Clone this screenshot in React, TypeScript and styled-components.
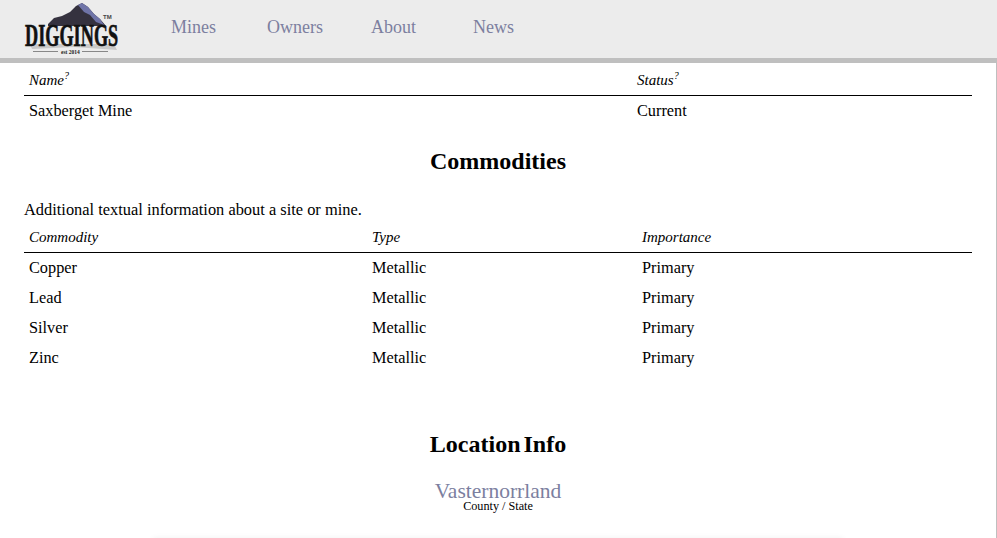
import { Fragment } from "react";
import styled, { createGlobalStyle } from "styled-components";

const Global = createGlobalStyle`
  html, body {
    margin: 0;
    padding: 0;
    background: #fff;
  }

  body {
    font-family: "Liberation Serif", "DejaVu Serif", serif;
    color: #000;
    overflow: hidden;
  }
`;

const Page = styled.div`
  width: 997px;
  height: 538px;
  overflow: hidden;
  box-sizing: border-box;
`;

const Header = styled.header`
  display: flex;
  align-items: center;
  height: 58px;
  background: #ececec;
  border-bottom: 5px solid #bfbfbf;
`;

const LogoWrap = styled.div`
  width: 171px;
  padding-left: 24px;
  box-sizing: border-box;
  display: flex;
`;

const Nav = styled.nav`
  display: grid;
  grid-template-columns: 96px 104px 102px auto;
  height: 100%;
  align-items: center;
  margin-top: -4px;
`;

const NavLink = styled.a`
  font-size: 18px;
  color: #7c7f9f;
`;

const Main = styled.main`
  border-right: 1px solid #bfbfbf;
  height: 475px;
  padding: 0 24px;
  box-sizing: border-box;
  width: 997px;
  overflow: hidden;
`;

const Table = styled.div<{ $cols: string }>`
  display: grid;
  grid-template-columns: ${({ $cols }) => $cols};
  width: 948px;
`;

const HeadCell = styled.div`
  font-style: italic;
  font-size: 15px;
  height: 33px;
  line-height: 35px;
  padding-left: 5px;
  border-bottom: 1px solid #000;
  box-sizing: border-box;

  sup {
    font-size: 10px;
    line-height: 0;
    vertical-align: 6px;
  }
`;

const BodyCell = styled.div`
  font-size: 16.3px;
  height: 30px;
  line-height: 30px;
  padding-left: 5px;
`;

const SectionTitle = styled.h2<{ $top: number; $bottom: number }>`
  margin: ${({ $top }) => $top}px 0 ${({ $bottom }) => $bottom}px;
  text-align: center;
  font-size: 24px;
  line-height: 28px;
  font-weight: 700;
  word-spacing: -3px;
`;

const Note = styled.p`
  margin: 0;
  font-size: 16.4px;
  line-height: 20px;
`;

const Place = styled.div`
  margin-top: 24px;
  text-align: center;
  font-size: 21.5px;
  line-height: 18px;
  color: #7c7f9f;
`;

const PlaceLabel = styled.div`
  text-align: center;
  font-size: 12.2px;
  line-height: 13px;
`;

const MapFrame = styled.div`
  width: 690px;
  height: 200px;
  margin: 25px auto 0;
  box-shadow: 0 0 6px rgba(0, 0, 0, 0.06);
`;

const Logo = () => (
  <svg width="97" height="56" viewBox="0 0 97 56">
    <path d="M24 23 L30 17 L38 15 L46 11 L52 5 L58 2 L64 6 L70 13 L76 18 L82 25 L24 25Z" fill="#35323f" />
    <path d="M54 4 L58 2 L64 6 L70 13 L76 18 L80 24 L72 21 L66 14 L60 11Z" fill="#6f74a8" />
    <path d="M6 43 L90 43 L93 49 L50 46 L8 48Z" fill="#c9c9c9" />
    <text
      transform="translate(1 45) scale(0.57 1)"
      fontFamily="Liberation Serif"
      fontWeight="700"
      fontSize="32"
      fill="#111"
      stroke="#111"
      strokeWidth="0.7"
    >
      DIGGINGS
    </text>
    <text x="79" y="18" fontFamily="Liberation Sans" fontWeight="700" fontSize="6" fill="#444">
      TM
    </text>
    <path d="M9 50.5 H34 M58 50.5 H84" stroke="#888" strokeWidth="1" />
    <text x="37" y="52.5" fontFamily="Liberation Serif" fontWeight="700" fontSize="5.5" fill="#222">
      est 2014
    </text>
  </svg>
);

const commodities = ["Copper", "Lead", "Silver", "Zinc"];

export default function App() {
  return (
    <Page>
      <Global />
      <Header>
        <LogoWrap>
          <Logo />
        </LogoWrap>
        <Nav>
          <NavLink>Mines</NavLink>
          <NavLink>Owners</NavLink>
          <NavLink>About</NavLink>
          <NavLink>News</NavLink>
        </Nav>
      </Header>
      <Main>
        <Table $cols="608px 1fr">
          <HeadCell>
            Name<sup>?</sup>
          </HeadCell>
          <HeadCell>
            Status<sup>?</sup>
          </HeadCell>
          <BodyCell>Saxberget Mine</BodyCell>
          <BodyCell>Current</BodyCell>
        </Table>
        <SectionTitle $top={21} $bottom={25}>Commodities</SectionTitle>
        <Note>Additional textual information about a site or mine.</Note>
        <Table $cols="343px 270px 1fr">
          <HeadCell>Commodity</HeadCell>
          <HeadCell>Type</HeadCell>
          <HeadCell>Importance</HeadCell>
          {commodities.map((name) => (
            <Fragment key={name}>
              <BodyCell>{name}</BodyCell>
              <BodyCell>Metallic</BodyCell>
              <BodyCell>Primary</BodyCell>
            </Fragment>
          ))}
        </Table>
        <SectionTitle $top={57} $bottom={0}>Location Info</SectionTitle>
        <Place>Vasternorrland</Place>
        <PlaceLabel>County / State</PlaceLabel>
        <MapFrame />
      </Main>
    </Page>
  );
}
